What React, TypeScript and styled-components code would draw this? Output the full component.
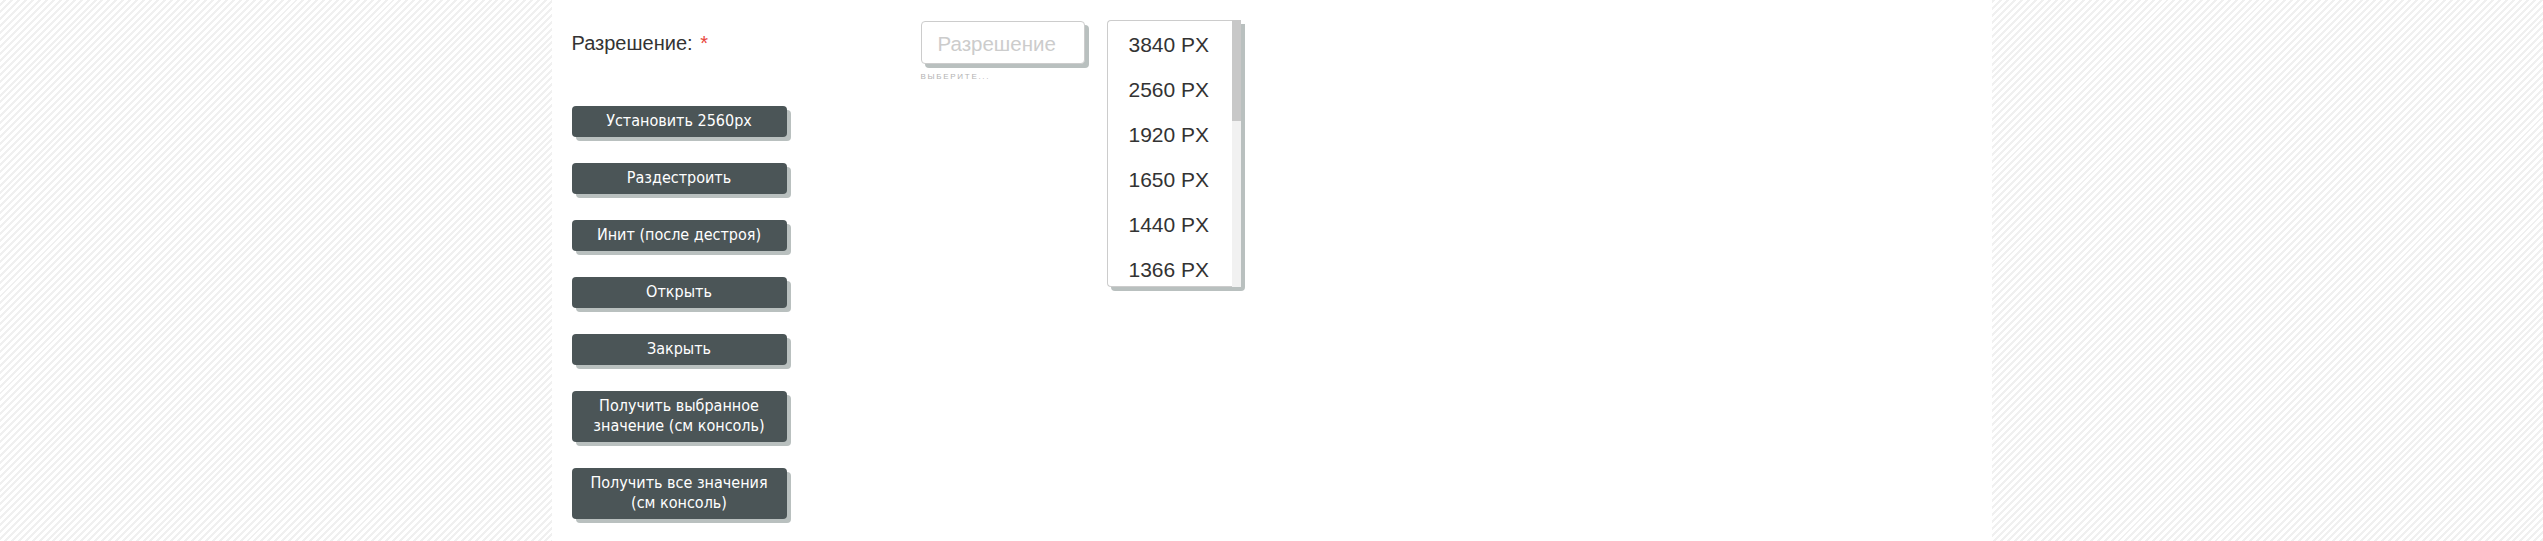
import * as React from "react"
import styled, { createGlobalStyle } from "styled-components"

const shadowColor = "#b9c0bf"
const buttonColor = "#4b5557"

const GlobalStyle = createGlobalStyle`
    html, body {
        margin: 0;
        padding: 0;
        height: 100%;
    }
    body {
        font-family: "Liberation Sans", Arial, sans-serif;
        background-color: #ffffff;
        background-image: repeating-linear-gradient(
            135deg,
            #ffffff 0px,
            #ffffff 2.8px,
            #f0f0f0 2.8px,
            #f0f0f0 4.9px
        );
    }
`

const Page = styled.div`
    max-width: 1440px;
    min-height: 100vh;
    margin: 0 auto;
    padding: 21px 20px 0;
    box-sizing: border-box;
    background: #ffffff;
`

const FormRow = styled.div`
    display: flex;
    align-items: flex-start;
    height: 85px;
`

const Label = styled.label`
    width: 349px;
    padding-top: 11px;
    font-size: 20px;
    color: #333333;
`

const Required = styled.span`
    color: #e8453c;
    margin-left: 2px;
`

const Field = styled.div`
    position: relative;
`

const SelectBox = styled.div`
    width: 164px;
    height: 43px;
    box-sizing: border-box;
    padding: 2px 16px 0;
    display: flex;
    align-items: center;
    border: 1px solid #cccccc;
    border-radius: 4px;
    background: #ffffff;
    box-shadow: 4px 4px 0 ${shadowColor};
    font-size: 20.5px;
    color: #cccccc;
`

const Hint = styled.div`
    margin-top: 8px;
    font-size: 8px;
    letter-spacing: 1.7px;
    color: #b3b3b3;
    text-transform: uppercase;
`

const Dropdown = styled.div`
    position: absolute;
    left: 186px;
    top: -1px;
    width: 134px;
    height: 267px;
    display: flex;
    box-sizing: border-box;
    background: #ffffff;
    border: 1px solid #cccccc;
    border-right: none;
    border-radius: 4px 0 4px 4px;
    box-shadow: 4px 4px 0 ${shadowColor};
`

const OptionList = styled.ul`
    flex: 1;
    margin: 0;
    padding: 1px 0 0;
    list-style: none;
    overflow: hidden;
`

const Option = styled.li`
    height: 45px;
    line-height: 45px;
    padding-left: 21px;
    font-size: 21px;
    color: #333333;
    white-space: nowrap;
`

const ScrollTrack = styled.div`
    width: 9px;
    margin: -1px 0 -1px;
    background: #f1f1f1;
`

const ScrollThumb = styled.div`
    height: 101px;
    background: #c8c8c8;
`

const Buttons = styled.div`
    display: flex;
    flex-direction: column;
    align-items: flex-start;
    gap: 26px;
`

const ActionButton = styled.button`
    width: 215px;
    padding: 5px 6px 6px;
    border: none;
    border-radius: 4px;
    background: ${buttonColor};
    box-shadow: 4px 4px 0 ${shadowColor};
    color: #ffffff;
    font-family: "DejaVu Sans Condensed", "DejaVu Sans", sans-serif;
    font-stretch: condensed;
    font-size: 16px;
    line-height: 20px;
    text-align: center;
    white-space: pre-line;
    cursor: pointer;
`

const resolutions = [3840, 2560, 1920, 1650, 1440, 1366]

const actions = [
    "Установить 2560px",
    "Раздестроить",
    "Инит (после дестроя)",
    "Открыть",
    "Закрыть",
    "Получить выбранное\nзначение (см консоль)",
    "Получить все значения\n(см консоль)",
]

const App = () => {
    return (
        <Page>
            <GlobalStyle />
            <FormRow>
                <Label>Разрешение: <Required>*</Required></Label>
                <Field>
                    <SelectBox>Разрешение</SelectBox>
                    <Hint>Выберите...</Hint>
                    <Dropdown>
                        <OptionList>
                            { resolutions.map(r => <Option key={ r }>{ r } PX</Option>) }
                        </OptionList>
                        <ScrollTrack>
                            <ScrollThumb />
                        </ScrollTrack>
                    </Dropdown>
                </Field>
            </FormRow>
            <Buttons>
                { actions.map(a => <ActionButton key={ a }>{ a }</ActionButton>) }
            </Buttons>
        </Page>
    )
}

export default App
